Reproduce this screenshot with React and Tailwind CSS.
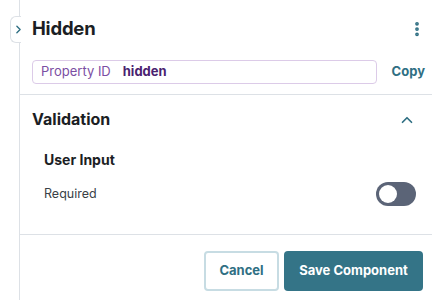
import { ChevronRight, ChevronUp, EllipsisVertical } from "lucide-react"

export default function App() {
  return (
    <div className="flex h-[300px] w-[432px] overflow-hidden bg-white font-['Inter',sans-serif]">
      <div className="w-[19px] shrink-0" />
      <div className="relative flex flex-1 flex-col border-l border-[#dde1e6]">
        <div className="absolute left-[-10px] top-[16px] flex h-[27px] w-[11px] items-center justify-center rounded-l-md border border-r-0 border-[#dde1e6] bg-white">
          <ChevronRight className="ml-[5px] h-[13px] w-[13px] shrink-0 text-[#2f6f83]" strokeWidth={2.5} />
        </div>

        <div className="flex h-[56px] items-center justify-between pl-3 pr-2 pt-[2px]">
          <h1 className="text-[18.5px] font-bold tracking-[-0.2px] text-[#1b1e24]">Hidden</h1>
          <EllipsisVertical className="mr-[-2px] h-[18px] w-[18px] text-[#2f6f83]" strokeWidth={3} />
        </div>

        <div className="mt-[4px] flex items-center gap-[15px] pl-3 pr-[7px]">
          <div className="flex h-[24px] flex-1 items-center gap-[12px] rounded-[4px] border border-[#dccbe8] px-[8px] text-[13px]">
            <span className="text-[#7b4ea3]">Property ID</span>
            <span className="font-bold text-[#4a2270]">hidden</span>
          </div>
          <span className="text-[13px] font-bold text-[#2f6f83]">Copy</span>
        </div>

        <div className="mt-[10px] border-t border-[#dde1e6]" />

        <div className="flex h-[139px] flex-col pl-3 pr-4">
          <div className="flex h-[48px] items-center justify-between">
            <h2 className="text-[16px] font-bold text-[#1b1e24]">Validation</h2>
            <ChevronUp className="mt-[2px] h-[18px] w-[18px] text-[#2f6f83]" strokeWidth={2.25} />
          </div>
          <div className="pl-3">
            <h3 className="mt-[6px] text-[14px] font-bold text-[#1b1e24]">User Input</h3>
            <div className="mt-[12px] flex items-center justify-between">
              <span className="text-[12.5px] text-[#3a3f47]">Required</span>
              <div className="flex h-[24px] w-[40px] items-center rounded-full bg-[#5b6477] px-[3px]">
                <div className="h-[18px] w-[18px] rounded-full bg-white" />
              </div>
            </div>
          </div>
        </div>

        <div className="border-t border-[#dde1e6]" />

        <div className="flex justify-end gap-[5px] pr-[9px] pt-[16px]">
          <button className="h-[40px] w-[75px] rounded-[4px] border-2 border-[#c7dce3] bg-white text-[13px] font-bold text-[#2f6f83]">
            Cancel
          </button>
          <button className="h-[40px] w-[139px] rounded-[4px] bg-[#347487] text-[13px] font-bold text-white">
            Save Component
          </button>
        </div>
      </div>
    </div>
  )
}
